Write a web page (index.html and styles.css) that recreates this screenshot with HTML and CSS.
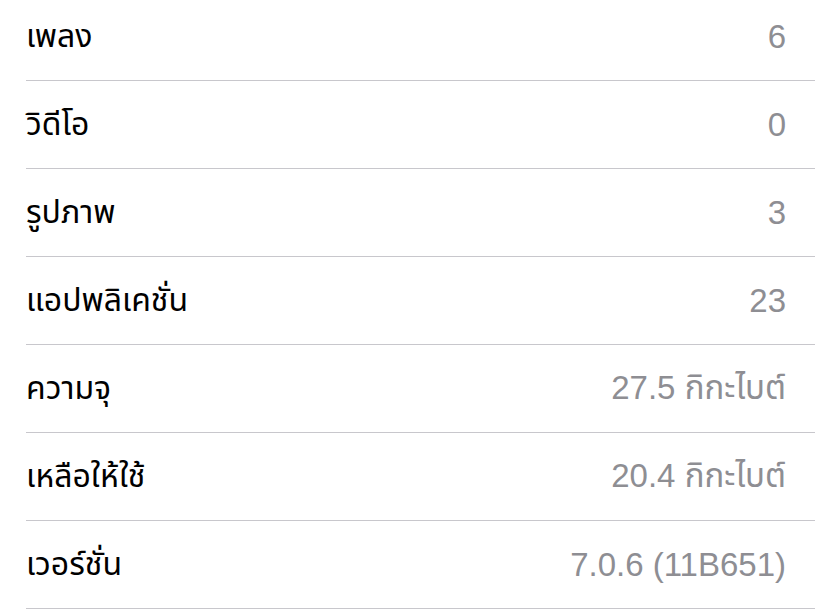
FILE: index.html
```html
<!DOCTYPE html>
<html lang="th">
<head>
<meta charset="utf-8">
<link rel="stylesheet" href="styles.css">
</head>
<body>
<div class="list">
  <div class="row"><span class="label">เพลง</span><span class="value">6</span></div>
  <div class="row"><span class="label">วิดีโอ</span><span class="value">0</span></div>
  <div class="row"><span class="label">รูปภาพ</span><span class="value">3</span></div>
  <div class="row"><span class="label">แอปพลิเคชั่น</span><span class="value">23</span></div>
  <div class="row"><span class="label">ความจุ</span><span class="value">27.5 กิกะไบต์</span></div>
  <div class="row"><span class="label">เหลือให้ใช้</span><span class="value">20.4 กิกะไบต์</span></div>
  <div class="row"><span class="label">เวอร์ชั่น</span><span class="value">7.0.6 (11B651)</span></div>
</div>
</body>
</html>
```
FILE: styles.css
```css
html, body {
  margin: 0;
  padding: 0;
  background: #ffffff;
}
body {
  width: 815px;
  height: 610px;
  overflow: hidden;
}
.list {
  margin-top: -7px;
  padding-left: 26px;
}
.row {
  height: 87px;
  display: flex;
  align-items: center;
  justify-content: space-between;
  padding-right: 29px;
  border-bottom: 1px solid #c8c7cc;
}
.label {
  font-family: "Noto Sans", "Noto Sans Thai", "DejaVu Sans", sans-serif;
  font-size: 32px;
  color: #000000;
}
.value {
  font-family: "Liberation Sans", "Noto Sans", "Noto Sans Thai", sans-serif;
  font-size: 33px;
  color: #8e8e93;
}
```
